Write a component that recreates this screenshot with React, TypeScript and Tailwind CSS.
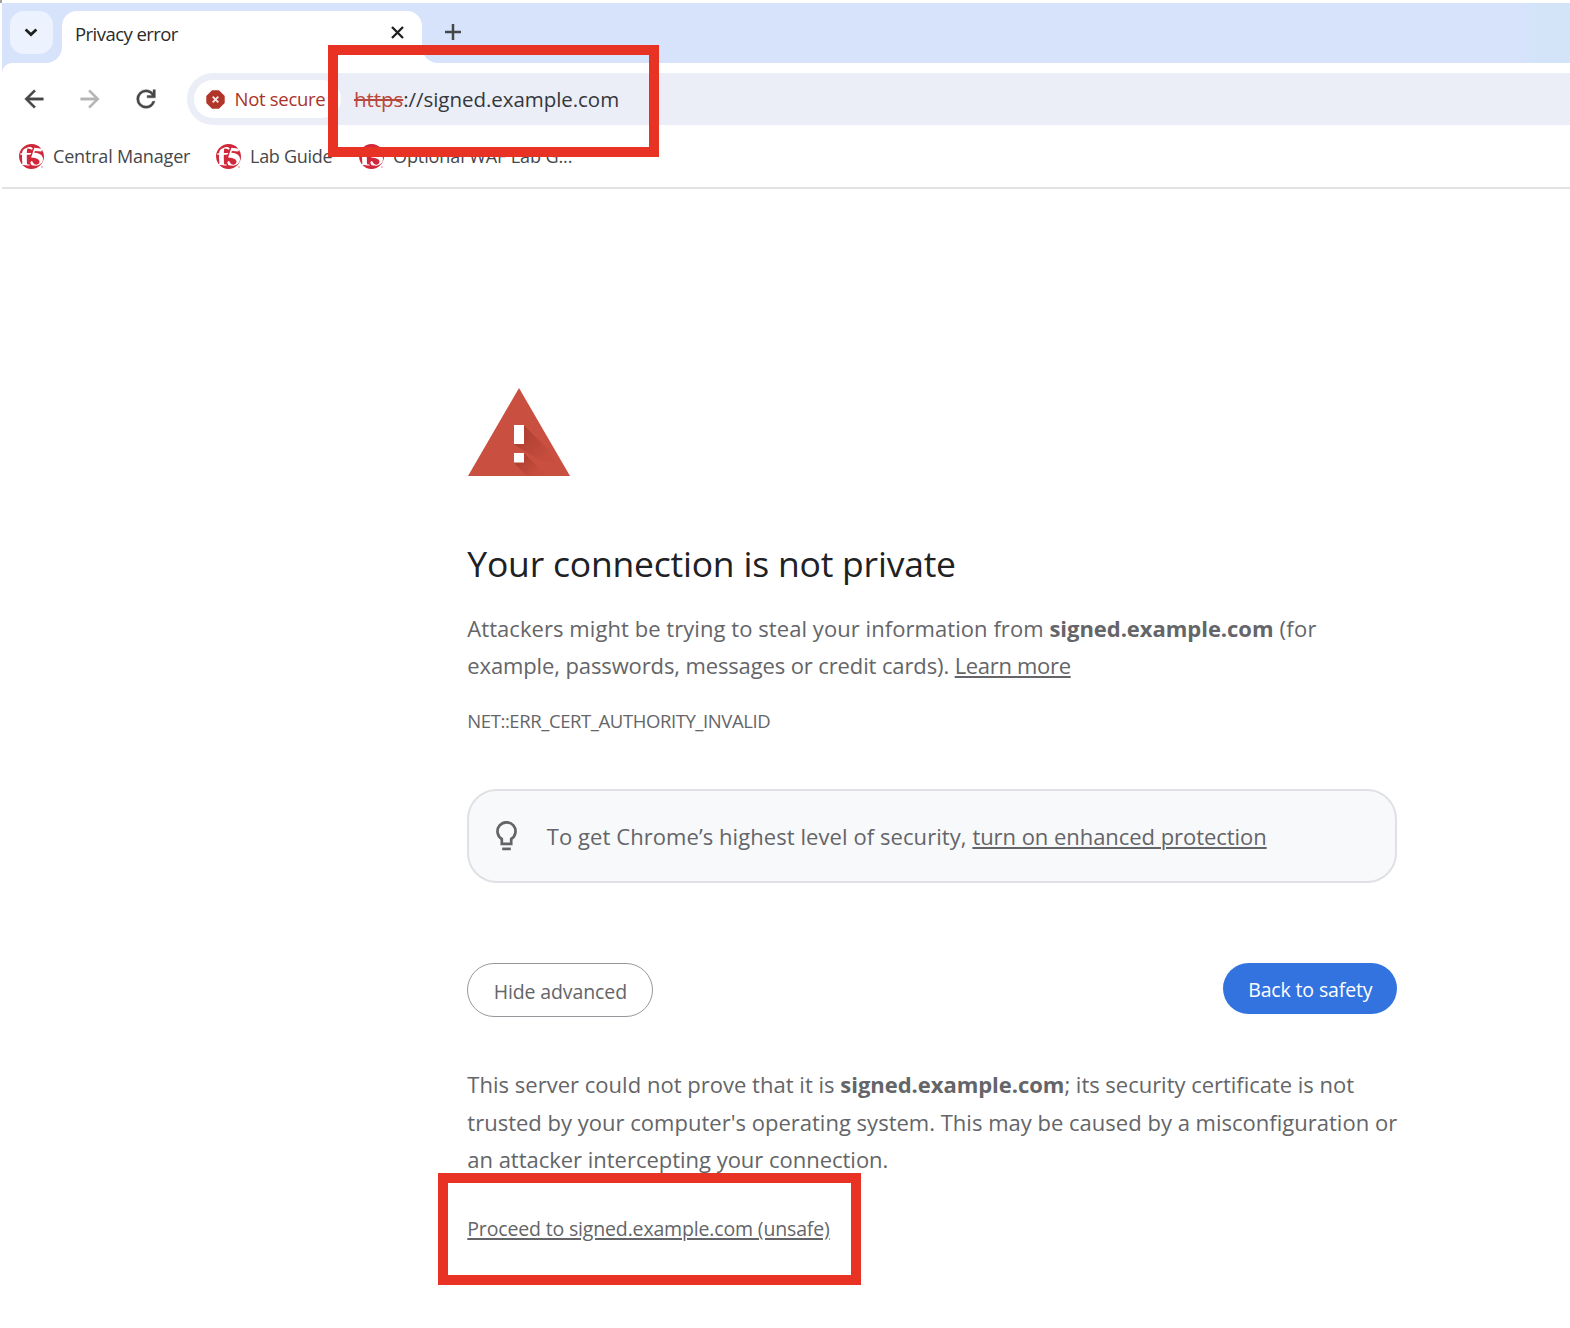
import React from 'react';
import { SiF5 } from 'react-icons/si';

const ChevronDown = () => (
  <svg width="14" height="9" viewBox="0 0 14 9" fill="none" stroke="#1f1f1f" strokeWidth="2.7">
    <path d="M1.6 1.5 7 6.6 12.4 1.5" />
  </svg>
);

const CloseIcon = () => (
  <svg width="13" height="13" viewBox="0 0 13 13" stroke="#1f1f1f" strokeWidth="2.3">
    <path d="M1 1 12 12M12 1 1 12" />
  </svg>
);

const PlusIcon = () => (
  <svg width="16" height="16" viewBox="0 0 16 16" stroke="#474747" strokeWidth="2.5">
    <path d="M8 0V16M0 8H16" />
  </svg>
);

const ToolbarIcon = ({ d, color }: { d: string; color: string }) => (
  <svg
    width="28"
    height="28"
    viewBox="0 -960 960 960"
    fill={color}
    stroke={color}
    strokeWidth="14"
    className="shrink-0"
  >
    <path d={d} />
  </svg>
);

const BACK = 'm313-440 224 224-57 56-320-320 320-320 57 56-224 224h487v80H313Z';
const FORWARD = 'M647-440H160v-80h487L423-744l57-56 320 320-320 320-57-56 224-224Z';
const RELOAD =
  'M480-160q-134 0-227-93t-93-227q0-134 93-227t227-93q69 0 132 28.5T720-690v-110h80v280H520v-80h168q-32-56-87.5-88T480-720q-100 0-170 70t-70 170q0 100 70 170t170 70q77 0 139-44t87-116h84q-28 106-114 173t-196 67Z';

const DangerIcon = () => (
  <svg width="19" height="19" viewBox="0 0 19 19" className="shrink-0">
    <path
      d="M6.3 1h6.4L18 6.3v6.4L12.7 18H6.3L1 12.7V6.3Z"
      fill="#b1362a"
      stroke="#b1362a"
      strokeWidth="1.4"
      strokeLinejoin="round"
    />
    <path d="M6.7 6.7l5.6 5.6M12.3 6.7l-5.6 5.6" stroke="#f7e6e4" strokeWidth="1.9" />
  </svg>
);

const WarningTriangle = () => (
  <svg width="102" height="89" viewBox="0 0 102 89" className="block">
    <defs>
      <linearGradient id="shade" gradientUnits="userSpaceOnUse" x1="50" y1="46" x2="76" y2="72">
        <stop offset="0" stopColor="#7a1f14" stopOpacity="0.34" />
        <stop offset="1" stopColor="#7a1f14" stopOpacity="0.03" />
      </linearGradient>
      <linearGradient id="shadeDot" gradientUnits="userSpaceOnUse" x1="50" y1="70" x2="67" y2="87">
        <stop offset="0" stopColor="#7a1f14" stopOpacity="0.34" />
        <stop offset="1" stopColor="#7a1f14" stopOpacity="0.03" />
      </linearGradient>
    </defs>
    <path d="M51 0 102 88H0Z" fill="#c94f40" />
    <path d="M56 37.5 81 62.5 87 74 71 72 46 56.5Z" fill="url(#shade)" />
    <path d="M56 65 79 88H59L46 75Z" fill="url(#shadeDot)" />
    <rect x="46" y="37" width="10" height="19" fill="#fff" />
    <rect x="46" y="65" width="10" height="9.5" fill="#fff" />
  </svg>
);

const BulbIcon = () => (
  <svg width="21" height="30" viewBox="0 0 21 30" fill="none" stroke="#646464" strokeWidth="2.7" className="shrink-0">
    <path d="M5.8 22.8V18A9 9 0 1 1 15.2 18V22.8Z" />
    <path d="M6.2 27.9H14.8" />
  </svg>
);

const Bookmark = ({ label, className }: { label: string; className: string }) => (
  <div className={'flex items-center gap-[9px] whitespace-nowrap ' + className}>
    <SiF5 size={25} color="#d0273a" className="shrink-0" />
    <span>{label}</span>
  </div>
);

export default function App() {
  return (
    <div className='relative h-[1328px] w-[1570px] overflow-hidden bg-white pl-[2px] font-["Open_Sans","Noto_Sans",sans-serif]'>
      <div className="absolute left-0 top-0 h-[3px] w-[2px] bg-[#a3a3a3]" />

      <header className="pt-[3px]">
        <div className="bg-[#d7e2fb]">
          {/* tab strip */}
          <div className="flex h-[60px] bg-[linear-gradient(to_right,#d7e2fb_1520px,#d3e4f9_1528px)]">
            <div className="flex w-[60px] justify-start bg-white">
              <div className="w-full rounded-br-[16px] bg-[#d7e2fb] pl-2 pt-2">
                <button className="flex h-[43px] w-[43px] items-center justify-center rounded-[14px] bg-[#ecf2fe] pr-px">
                  <ChevronDown />
                </button>
              </div>
            </div>
            <div className="bg-[#d7e2fb] pt-2">
              <div className="flex h-[52px] w-[360px] justify-between rounded-t-[15px] bg-white pl-[13px] pr-[18px]">
                <span className="text-[18.5px] leading-[45px] tracking-[-0.55px] text-[#2a2a2a]">Privacy error</span>
                <span className="mt-[15px]">
                  <CloseIcon />
                </span>
              </div>
            </div>
            <div className="h-[16px] w-[16px] self-end bg-white">
              <div className="h-full w-full rounded-bl-[16px] bg-[#d7e2fb]" />
            </div>
            <button className="ml-[7px] mt-[21px] h-4 w-4">
              <PlusIcon />
            </button>
          </div>

          {/* toolbar */}
          <div className="flex h-[72px] items-center rounded-tl-[10px] bg-white pl-[18px]">
            <ToolbarIcon d={BACK} color="#474747" />
            <span className="ml-[28px] flex">
              <ToolbarIcon d={FORWARD} color="#b5b5b5" />
            </span>
            <span className="ml-[28px] flex">
              <ToolbarIcon d={RELOAD} color="#474747" />
            </span>
            <div className="ml-[26.5px] flex h-[52px] flex-1 items-center rounded-l-full bg-[#ebeef6] pl-[7px]">
              <div className="flex h-[38px] w-[147px] items-center gap-[9.5px] rounded-full bg-white pl-[12.5px]">
                <DangerIcon />
                <span className="whitespace-nowrap text-[18.5px] leading-6 tracking-[-0.29px] text-[#a9332b]">
                  Not secure
                </span>
              </div>
              <div className="ml-[13.5px] whitespace-nowrap text-[20.5px] leading-7 tracking-[-0.05px] text-[#34373c]">
                <span className="text-[#b8473e] line-through decoration-2">https</span>
                <span>://signed.example.com</span>
              </div>
            </div>
          </div>
        </div>

        {/* bookmarks */}
        <div className="flex h-[54px] items-start border-b-2 border-[#e1e2e4] bg-white pl-[17px] pt-[9px] text-[18px] leading-[25px] text-[#45474b]">
          <Bookmark label="Central Manager" className="w-[197px] tracking-[-0.18px]" />
          <Bookmark label="Lab Guide" className="w-[143px] tracking-[-0.27px]" />
          <Bookmark label="Optional WAF Lab G..." className="tracking-[-0.1px]" />
        </div>
      </header>

      <main className="ml-[465.3px] w-[930px] pt-[199px] text-[22px] leading-[37.2px] text-[#646568]">
        <div className="pl-[0.7px]">
          <WarningTriangle />
        </div>
        <h1 className="mt-[62px] whitespace-nowrap text-[35.5px] leading-[48px] tracking-[-0.21px] text-[#202124]">
          Your connection is not private
        </h1>
        <p className="mt-[23px] whitespace-nowrap">
          <span className="tracking-[0.06px]">Attackers might be trying to steal your information from </span>
          <b className="tracking-[-0.04px]">signed.example.com</b>
          <span className="tracking-[0.3px]"> (for</span>
          <br />
          <span className="tracking-[-0.12px]">example, passwords, messages or credit cards). </span>
          <a className="tracking-[-0.32px] underline decoration-[1.5px] underline-offset-2">Learn more</a>
        </p>
        <p className="mt-[25px] whitespace-nowrap text-[18.5px] leading-6 tracking-[-0.41px]">
          NET::ERR_CERT_AUTHORITY_INVALID
        </p>

        <div className="mt-[55.5px] flex h-[94.5px] items-center rounded-[30px] border-2 border-[#dfe1e5] bg-[#f8f9fb] pl-[27px]">
          <BulbIcon />
          <p className="ml-[29.5px] whitespace-nowrap">
            <span className="tracking-[0.07px]">To get Chrome’s highest level of security, </span>
            <a className="tracking-[-0.05px] underline decoration-[1.5px] underline-offset-2">
              turn on enhanced protection
            </a>
          </p>
        </div>

        <div className="mt-[79.5px] flex items-start justify-between text-[19.5px] leading-6">
          <button className="h-[54.5px] w-[186px] rounded-full border-[1.5px] border-[#94989d] pt-[3px] tracking-[-0.11px]">
            Hide advanced
          </button>
          <button className="h-[51.5px] w-[174px] rounded-full bg-[#3273e0] pt-[2px] tracking-[-0.14px] text-white">
            Back to safety
          </button>
        </div>

        <p className="mt-[49px] whitespace-nowrap">
          <span className="tracking-[0.02px]">This server could not prove that it is </span>
          <b className="tracking-[-0.04px]">signed.example.com</b>
          <span className="tracking-[-0.02px]">; its security certificate is not</span>
          <br />
          <span className="tracking-[0.01px]">
            trusted by your computer's operating system. This may be caused by a misconfiguration or
          </span>
          <br />
          <span className="tracking-[-0.02px]">an attacker intercepting your connection.</span>
        </p>
        <p className="mt-[38.5px] whitespace-nowrap text-[19.5px] leading-6 tracking-[-0.16px]">
          <a className="underline decoration-[1.5px] underline-offset-2">Proceed to signed.example.com (unsafe)</a>
        </p>
      </main>

      {/* highlight frames */}
      <div className="absolute left-[328px] top-[45px] h-[112px] w-[331px] border-[10px] border-[#e83223]" />
      <div className="absolute left-[438px] top-[1173px] h-[112px] w-[423px] border-[10px] border-[#e83223]" />
    </div>
  );
}
